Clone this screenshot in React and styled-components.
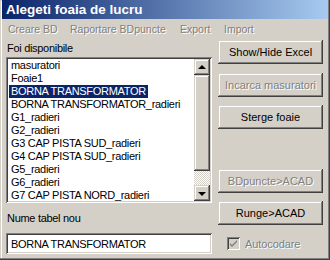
import React from 'react';
import styled, { createGlobalStyle } from 'styled-components';

const GlobalStyle = createGlobalStyle`
  body {
    margin: 0;
    background: #d4d0c8;
    font-family: "Liberation Sans", Arial, sans-serif;
  }
`;

const FACE = '#d4d0c8';

const Window = styled.div`
  width: 330px;
  height: 260px;
  box-sizing: border-box;
  padding: 0 2px 2px 2px;
  background: ${FACE};
  box-shadow: inset -1px -1px #404040, inset -2px -2px #808080,
    inset 1px 1px ${FACE}, inset 2px 2px #fff;
  overflow: hidden;
  font-size: 11px;
  color: #000;
`;

const TitleBar = styled.div`
  height: 19px;
  display: flex;
  align-items: center;
  padding-left: 4px;
  background: linear-gradient(to right, #0a246a, #a6caf0);
  color: #fff;
  font-weight: bold;
  font-size: 13.5px;
`;

const MenuBar = styled.div`
  height: 17px;
  margin-top: 1px;
  display: flex;
  align-items: center;
  padding-left: 6px;
`;

const MenuItem = styled.span`
  width: ${(p) => p.w}px;
  color: #808080;
  text-shadow: 1px 1px #fff;
  font-size: 10.5px;
  white-space: nowrap;
`;

const Content = styled.div`
  display: flex;
  padding-left: 4px;
`;

const LeftColumn = styled.div`
  width: 206px;
  display: flex;
  flex-direction: column;
`;

const RightColumn = styled.div`
  width: 105px;
  margin-left: 6px;
  display: flex;
  flex-direction: column;
  padding-top: 3px;
`;

const Label = styled.div`
  line-height: 14px;
  margin-top: ${(p) => p.top}px;
  padding-left: 1px;
  letter-spacing: -0.3px;
`;

const Sunken = styled.div`
  background: #fff;
  box-shadow: inset 1px 1px #808080, inset -1px -1px #fff,
    inset 2px 2px #404040, inset -2px -2px ${FACE};
  box-sizing: border-box;
`;

const ListBox = styled(Sunken)`
  margin-top: 2px;
  height: 146px;
  padding: 2px;
  display: flex;
`;

const Items = styled.div`
  flex: 1;
  overflow: hidden;
  padding-left: 1px;
`;

const Row = styled.div`
  height: 13px;
  line-height: 13px;
`;

const RowText = styled.span`
  display: inline-block;
  padding: 0 2px;
  white-space: nowrap;
  letter-spacing: -0.3px;
  background: ${(p) => (p.selected ? '#0a246a' : 'transparent')};
  color: ${(p) => (p.selected ? '#fff' : '#000')};
`;

const ScrollBar = styled.div`
  width: 16px;
  display: flex;
  flex-direction: column;
`;

const raised = `
  background: ${FACE};
  box-shadow: inset -1px -1px #404040, inset 1px 1px ${FACE},
    inset -2px -2px #808080, inset 2px 2px #fff;
`;

const ScrollButton = styled.div`
  ${raised}
  height: 16px;
  display: flex;
  align-items: center;
  justify-content: center;
`;

const Arrow = styled.div`
  width: 0;
  height: 0;
  border-left: 4px solid transparent;
  border-right: 4px solid transparent;
  ${(p) => (p.down ? 'border-top: 4px solid #000;' : 'border-bottom: 4px solid #000;')}
  margin-top: ${(p) => (p.down ? '1px' : '-1px')};
`;

const Track = styled.div`
  flex: 1;
  display: flex;
  flex-direction: column;
  background: repeating-conic-gradient(${FACE} 0 25%, #fff 0 50%) 0 0 / 2px 2px;
`;

const Thumb = styled.div`
  ${raised}
  height: 96px;
`;

const TextBox = styled(Sunken)`
  margin-top: 8px;
  height: 21px;
  display: flex;
  align-items: center;
  padding-left: 5px;
  letter-spacing: -0.3px;
`;

const Button = styled.div`
  ${raised}
  height: 24px;
  margin-top: ${(p) => p.top || 0}px;
  display: flex;
  align-items: center;
  justify-content: center;
  color: ${(p) => (p.disabled ? '#808080' : '#000')};
  text-shadow: ${(p) => (p.disabled ? '1px 1px #fff' : 'none')};
`;

const CheckRow = styled.div`
  display: flex;
  align-items: center;
  margin-top: 12px;
  padding-left: 9px;
  gap: 5px;
`;

const CheckBox = styled.div`
  width: 13px;
  height: 13px;
  box-sizing: border-box;
  background: ${FACE};
  box-shadow: inset 1px 1px #808080, inset -1px -1px #fff,
    inset 2px 2px #404040, inset -2px -2px ${FACE};
  display: flex;
  align-items: center;
  justify-content: center;
`;

const CheckLabel = styled.span`
  color: #808080;
  text-shadow: 1px 1px #fff;
  letter-spacing: -0.1px;
`;

const sheets = [
  'masuratori',
  'Foaie1',
  'BORNA TRANSFORMATOR',
  'BORNA TRANSFORMATOR_radieri',
  'G1_radieri',
  'G2_radieri',
  'G3 CAP PISTA SUD_radieri',
  'G4 CAP PISTA SUD_radieri',
  'G5_radieri',
  'G6_radieri',
  'G7 CAP PISTA NORD_radieri',
];

export default function App() {
  return (
    <>
      <GlobalStyle />
      <Window>
        <TitleBar>Alegeti foaia de lucru</TitleBar>
        <MenuBar>
          <MenuItem w={62}>Creare BD</MenuItem>
          <MenuItem w={110}>Raportare BDpuncte</MenuItem>
          <MenuItem w={44}>Export</MenuItem>
          <MenuItem w={40}>Import</MenuItem>
        </MenuBar>
        <Content>
          <LeftColumn>
            <Label top={4}>Foi disponibile</Label>
            <ListBox>
              <Items>
                {sheets.map((s, i) => (
                  <Row key={s}>
                    <RowText selected={i === 2}>{s}</RowText>
                  </Row>
                ))}
              </Items>
              <ScrollBar>
                <ScrollButton>
                  <Arrow />
                </ScrollButton>
                <Track>
                  <Thumb />
                </Track>
                <ScrollButton>
                  <Arrow down />
                </ScrollButton>
              </ScrollBar>
            </ListBox>
            <Label top={8}>Nume tabel nou</Label>
            <TextBox>BORNA TRANSFORMATOR</TextBox>
          </LeftColumn>
          <RightColumn>
            <Button>Show/Hide Excel</Button>
            <Button top={9} disabled>Incarca masuratori</Button>
            <Button top={8}>Sterge foaie</Button>
            <Button top={40} disabled>BDpuncte&gt;ACAD</Button>
            <Button top={8}>Runge&gt;ACAD</Button>
            <CheckRow>
              <CheckBox>
                <svg width="9" height="9" viewBox="0 0 9 9">
                  <path d="M1 4 L3 6 L8 1 L8 3 L3 8 L1 6 Z" fill="#808080" />
                </svg>
              </CheckBox>
              <CheckLabel>Autocodare</CheckLabel>
            </CheckRow>
          </RightColumn>
        </Content>
      </Window>
    </>
  );
}
